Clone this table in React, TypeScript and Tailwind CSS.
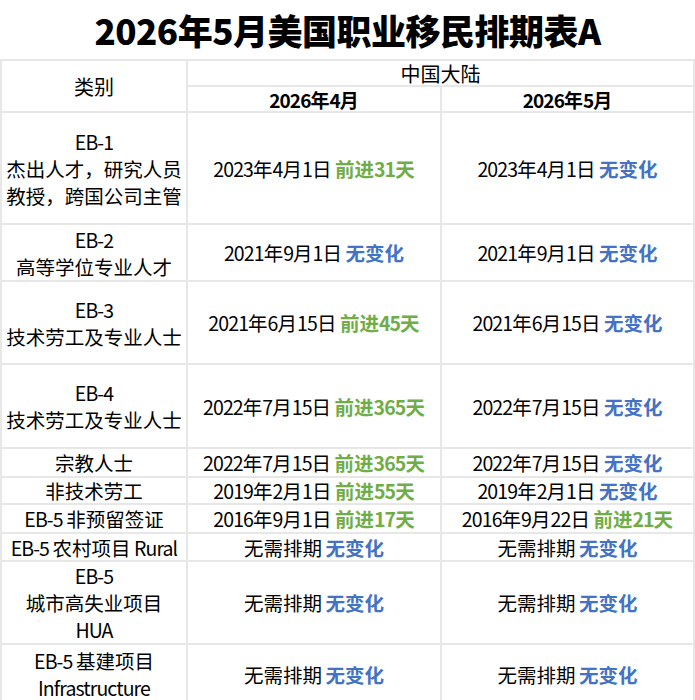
import React from "react";

type Seg = { t: string; c?: "g" | "b" };
type Row = { label: string[]; a: Seg[]; b: Seg[] };

const G = (t: string): Seg => ({ t, c: "g" });
const B = (t: string): Seg => ({ t, c: "b" });
const N = (t: string): Seg => ({ t });

const rows: Row[] = [
  { label: ["EB-1", "杰出人才，研究人员", "教授，跨国公司主管"], a: [N("2023年4月1日 "), G("前进31天")], b: [N("2023年4月1日 "), B("无变化")] },
  { label: ["EB-2", "高等学位专业人才"], a: [N("2021年9月1日 "), B("无变化")], b: [N("2021年9月1日 "), B("无变化")] },
  { label: ["EB-3", "技术劳工及专业人士"], a: [N("2021年6月15日 "), G("前进45天")], b: [N("2021年6月15日 "), B("无变化")] },
  { label: ["EB-4", "技术劳工及专业人士"], a: [N("2022年7月15日 "), G("前进365天")], b: [N("2022年7月15日 "), B("无变化")] },
  { label: ["宗教人士"], a: [N("2022年7月15日 "), G("前进365天")], b: [N("2022年7月15日 "), B("无变化")] },
  { label: ["非技术劳工"], a: [N("2019年2月1日 "), G("前进55天")], b: [N("2019年2月1日 "), B("无变化")] },
  { label: ["EB-5 非预留签证"], a: [N("2016年9月1日 "), G("前进17天")], b: [N("2016年9月22日 "), G("前进21天")] },
  { label: ["EB-5 农村项目 Rural"], a: [N("无需排期 "), B("无变化")], b: [N("无需排期 "), B("无变化")] },
  { label: ["EB-5", "城市高失业项目", "HUA"], a: [N("无需排期 "), B("无变化")], b: [N("无需排期 "), B("无变化")] },
  { label: ["EB-5 基建项目", "Infrastructure"], a: [N("无需排期 "), B("无变化")], b: [N("无需排期 "), B("无变化")] },
];

function Txt({ t }: { t: string }) {
  const parts = t.match(/[\x00-\x7F]+|[^\x00-\x7F]+/g) || [];
  return (
    <>
      {parts.map((p, i) =>
        /^[\x00-\x7F]+$/.test(p) ? (
          <span key={i} className="tracking-[-0.9px]">{p}</span>
        ) : (
          <span key={i}>{p}</span>
        )
      )}
    </>
  );
}

function Segs({ segs }: { segs: Seg[] }) {
  return (
    <span className="whitespace-pre">
      {segs.map((s, i) =>
        s.c === "g" ? (
          <span key={i} className="font-bold text-[#70ad47]"><Txt t={s.t} /></span>
        ) : s.c === "b" ? (
          <span key={i} className="font-bold text-[#4472c4]"><Txt t={s.t} /></span>
        ) : (
          <span key={i}><Txt t={s.t} /></span>
        )
      )}
    </span>
  );
}

export default function App() {
  return (
    <div className="w-[695px] bg-white text-black font-['Noto_Sans_CJK_SC','Noto_Sans',sans-serif]">
      <div className="h-[59px] flex items-center justify-center">
        <h1 className="text-[35px] font-black leading-none tracking-[-0.5px]">2026年5月美国职业移民排期表A</h1>
      </div>
      <div className="grid grid-cols-[184px_252px_251px] grid-rows-[24px_24px_110px_55px_81px_82px_27px_25px_27px_26px_81px_58px] gap-[2px] p-[2px] bg-[#e7e7e7] text-[19.5px] leading-[27px]">
        <div className="row-span-2 bg-white flex items-center justify-center text-[20px]">类别</div>
        <div className="col-span-2 bg-white flex items-center justify-center text-[20px]">中国大陆</div>
        <div className="bg-white flex items-center justify-center text-[19px] font-bold"><Txt t="2026年4月" /></div>
        <div className="bg-white flex items-center justify-center text-[19px] font-bold"><Txt t="2026年5月" /></div>
        {rows.map((r, i) => (
          <React.Fragment key={i}>
            <div className="bg-white flex flex-col items-center justify-center text-center">
              {r.label.map((l, j) => (
                <div key={j} className="whitespace-pre"><Txt t={l} /></div>
              ))}
            </div>
            <div className="bg-white flex items-center justify-center">
              <Segs segs={r.a} />
            </div>
            <div className="bg-white flex items-center justify-center">
              <Segs segs={r.b} />
            </div>
          </React.Fragment>
        ))}
      </div>
    </div>
  );
}
